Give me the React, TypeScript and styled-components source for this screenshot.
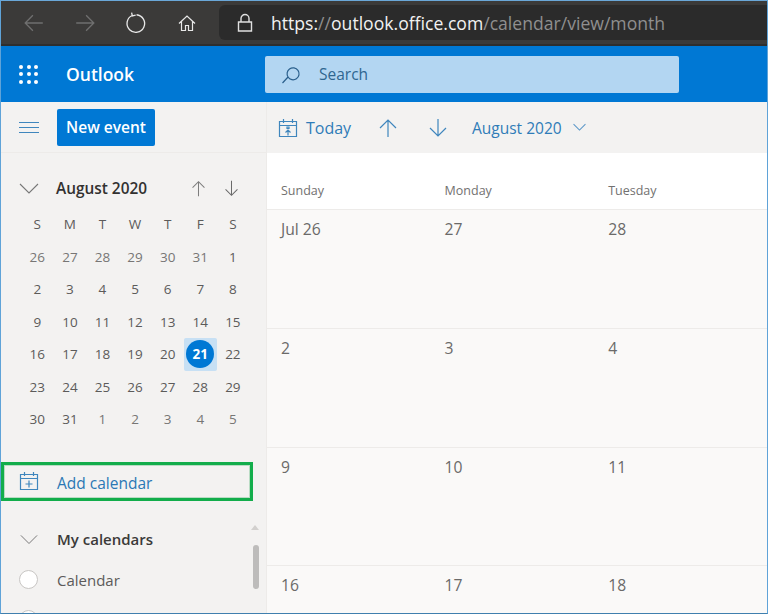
import { FC } from 'react';
import styled, { createGlobalStyle } from 'styled-components';

const GlobalStyle = createGlobalStyle`
  html, body {
    margin: 0;
    padding: 0;
    background: #f3f2f1;
  }
  * {
    box-sizing: border-box;
  }
`;

const MINI_WEEKS = [
  [26, 27, 28, 29, 30, 31, 1],
  [2, 3, 4, 5, 6, 7, 8],
  [9, 10, 11, 12, 13, 14, 15],
  [16, 17, 18, 19, 20, 21, 22],
  [23, 24, 25, 26, 27, 28, 29],
  [30, 31, 1, 2, 3, 4, 5],
];
const WEEK_LETTERS = ['S', 'M', 'T', 'W', 'T', 'F', 'S'];
const DAY_NAMES = ['Sunday', 'Monday', 'Tuesday', ''];
const MONTH_ROWS = [
  ['Jul 26', '27', '28', ''],
  ['2', '3', '4', ''],
  ['9', '10', '11', ''],
  ['16', '17', '18', ''],
];

const Line: FC<{ d: string; color: string; size?: number; width?: number }> = ({
  d,
  color,
  size = 20,
  width = 1.2,
}) => (
  <svg width={size} height={size} viewBox="0 0 20 20" fill="none" stroke={color} strokeWidth={width}>
    <path d={d} />
  </svg>
);

const CalendarGlyph: FC<{ plus?: boolean }> = ({ plus }) => (
  <svg width="20" height="20" viewBox="0 0 20 20" fill="none" stroke="#3f86bd" strokeWidth="1.2">
    <path d="M1.5 3.5h17v15h-17zM1.5 7.5h17M5.5 1v4M14.5 1v4" />
    {plus ? (
      <path d="M10 9.5v7M6.5 13h7" />
    ) : (
      <path d="M10 17.5v-5M7.5 14.5l2.5-2.5 2.5 2.5M9 9h2v1.5h-2z" />
    )}
  </svg>
);

const App: FC = () => (
  <>
    <GlobalStyle />
    <Frame>
      <BrowserBar>
        <NavSlot>
          <Line d="M18 10H2M9 3l-7 7 7 7" color="#6f6f6f" size={22} />
        </NavSlot>
        <NavSlot>
          <Line d="M2 10h16M11 3l7 7-7 7" color="#6f6f6f" size={22} />
        </NavSlot>
        <NavSlot>
          <Line d="M6.5 3.2a8 8 0 1 0 4-.7M6 .5l.7 3 3-.7" color="#e8e8e8" size={22} />
        </NavSlot>
        <NavSlot>
          <Line d="M2 10.5 10 3l8 7.5M4.5 8.5V17.5h4v-5h3v5h4V8.5" color="#e8e8e8" size={20} />
        </NavSlot>
        <AddressBar>
          <LockSlot>
            <Line d="M3.5 9h13v9h-13zM6 9V5.5a4 4 0 0 1 8 0V9" color="#e0e0e0" size={20} width={1.4} />
          </LockSlot>
          <UrlStrong>https:</UrlStrong>
          <UrlDim>//</UrlDim>
          <UrlStrong>outlook.office.com</UrlStrong>
          <UrlDim>/calendar/view/month</UrlDim>
        </AddressBar>
      </BrowserBar>

      <AppHeader>
        <WaffleSlot>
          <Waffle>
            {Array.from({ length: 9 }).map((_, i) => (
              <WaffleDot key={i} />
            ))}
          </Waffle>
        </WaffleSlot>
        <Brand>Outlook</Brand>
        <SearchBox>
          <Line d="M7 13a6 6 0 1 0 1.5-8 6 6 0 0 0-1.5 8zM7.5 12.5 1.5 19" color="#2a5f8c" size={20} />
          <SearchLabel>Search</SearchLabel>
        </SearchBox>
      </AppHeader>

      <Body>
        <Sidebar>
          <SideToolbar>
            <Hamburger>
              <HamburgerBar />
              <HamburgerBar />
              <HamburgerBar />
            </Hamburger>
            <NewEvent>New event</NewEvent>
          </SideToolbar>

          <MiniHeader>
            <Line d="M1 6l9 9 9-9" color="#777" size={20} width={1.1} />
            <MiniTitle>August 2020</MiniTitle>
            <MiniArrows>
              <Line d="M10 19V2M3 9l7-7 7 7" color="#7d7d7d" size={17} />
              <Line d="M10 1v17M3 11l7 7 7-7" color="#6a6a6a" size={17} />
            </MiniArrows>
          </MiniHeader>

          <MiniGrid>
            {WEEK_LETTERS.map((letter, i) => (
              <MiniCell key={`l${i}`}>{letter}</MiniCell>
            ))}
            {MINI_WEEKS.flat().map((day, i) =>
              i === 26 ? (
                <MiniCell key={i}>
                  <TodayHighlight>
                    <TodayDot>{day}</TodayDot>
                  </TodayHighlight>
                </MiniCell>
              ) : (
                <MiniCell key={i} $muted={i < 6 || i > 36}>
                  {day}
                </MiniCell>
              ),
            )}
          </MiniGrid>

          <AddCalendar>
            <CalendarGlyph plus />
            <AddLabel>Add calendar</AddLabel>
          </AddCalendar>

          <GroupRow>
            <Line d="M1 6l9 9 9-9" color="#777" size={18} width={1.1} />
            <GroupTitle>My calendars</GroupTitle>
          </GroupRow>
          <CalendarRow>
            <Radio />
            <CalendarName>Calendar</CalendarName>
          </CalendarRow>
          <Radio />

          <ScrollArrow />
          <ScrollThumb />
        </Sidebar>

        <Main>
          <MainToolbar>
            <CalendarGlyph />
            <TodayLabel>Today</TodayLabel>
            <ToolArrow>
              <Line d="M10 19V2M2 10l8-8 8 8" color="#3f86bd" size={20} />
            </ToolArrow>
            <ToolArrow>
              <Line d="M10 1v17M2 10l8 8 8-8" color="#3f86bd" size={20} />
            </ToolArrow>
            <MonthLabel>August 2020</MonthLabel>
            <Line d="M3 6l7 7 7-7" color="#5a97c8" size={17} />
          </MainToolbar>

          <DayHeader>
            {DAY_NAMES.map((name, i) => (
              <DayName key={i}>{name}</DayName>
            ))}
          </DayHeader>

          <Month>
            {MONTH_ROWS.flat().map((label, i) => (
              <MonthCell key={i}>{label}</MonthCell>
            ))}
          </Month>
        </Main>
      </Body>
    </Frame>
  </>
);

const Frame = styled.div`
  width: 768px;
  height: 614px;
  overflow: hidden;
  display: flex;
  flex-direction: column;
  border-top: 1px solid #6aa7d8;
  border-left: 1px solid #5fa3d8;
  border-right: 1px solid #5fa3d8;
  border-bottom: 1px solid #3f7fae;
  font-family: 'Open Sans', 'Noto Sans', sans-serif;
`;

const BrowserBar = styled.div`
  height: 45px;
  flex: none;
  display: flex;
  align-items: center;
  padding: 0 0 0 7.5px;
  background: #3b3a39;
  border-bottom: 2px solid #2e2e2e;
`;

const NavSlot = styled.div`
  width: 51px;
  display: flex;
  justify-content: center;
  align-items: center;
`;

const AddressBar = styled.div`
  height: 35px;
  flex: 1;
  margin-left: 6.5px;
  display: flex;
  align-items: center;
  padding-left: 16px;
  background: #2b2b2b;
  border-radius: 6px 0 0 6px;
  font-size: 17.6px;
  white-space: nowrap;
`;

const LockSlot = styled.div`
  display: flex;
  margin-right: 16px;
`;

const UrlStrong = styled.span`
  color: #f2f2f2;
`;

const UrlDim = styled.span`
  color: #8f8f8f;
`;

const AppHeader = styled.div`
  height: 56px;
  flex: none;
  display: flex;
  align-items: center;
  background: #0078d4;
`;

const WaffleSlot = styled.div`
  width: 65px;
  display: flex;
  padding-left: 18px;
`;

const Waffle = styled.div`
  display: grid;
  grid-template-columns: repeat(3, 4px);
  gap: 3.5px;
`;

const WaffleDot = styled.span`
  width: 4px;
  height: 4px;
  border-radius: 50%;
  background: #fff;
`;

const Brand = styled.div`
  width: 199px;
  color: #fff;
  font-size: 17.5px;
  font-weight: 600;
`;

const SearchBox = styled.div`
  width: 414px;
  height: 37px;
  display: flex;
  align-items: center;
  padding-left: 16px;
  gap: 18px;
  background: #b3d6f2;
  border-radius: 2px;
`;

const SearchLabel = styled.span`
  color: #2f6690;
  font-size: 15.5px;
`;

const Body = styled.div`
  flex: 1;
  min-height: 0;
  display: flex;
`;

const Sidebar = styled.div`
  position: relative;
  width: 265px;
  flex: none;
  overflow: hidden;
  background: #f3f2f1;
`;

const SideToolbar = styled.div`
  height: 51px;
  display: flex;
  align-items: center;
  gap: 18px;
  padding-left: 18px;
  border-bottom: 1px solid #edebe9;
`;

const Hamburger = styled.div`
  display: flex;
  flex-direction: column;
  gap: 4px;
  width: 20px;
`;

const HamburgerBar = styled.span`
  height: 1px;
  background: #3f86bd;
`;

const NewEvent = styled.div`
  width: 98px;
  height: 37px;
  display: flex;
  align-items: center;
  justify-content: center;
  background: #0078d4;
  border-radius: 2px;
  color: #fff;
  font-size: 15.5px;
  font-weight: 600;
`;

const MiniHeader = styled.div`
  display: flex;
  align-items: center;
  height: 30px;
  margin-top: 20px;
  padding-left: 18px;
`;

const MiniTitle = styled.div`
  width: 134px;
  margin-left: 17px;
  color: #323130;
  font-size: 15.4px;
  font-weight: 600;
`;

const MiniArrows = styled.div`
  display: flex;
  gap: 16px;
`;

const MiniGrid = styled.div`
  display: grid;
  grid-template-columns: repeat(7, 32.6px);
  grid-auto-rows: 32.5px;
  margin-top: 5px;
  padding-left: 20px;
`;

const MiniCell = styled.div<{ $muted?: boolean }>`
  display: flex;
  align-items: center;
  justify-content: center;
  color: ${({ $muted }) => ($muted ? '#777675' : '#5c5b5a')};
  font-size: 13.5px;
`;

const TodayHighlight = styled.div`
  width: 33px;
  height: 33px;
  display: flex;
  align-items: center;
  justify-content: center;
  background: #c7e0f4;
  border-radius: 2px;
`;

const TodayDot = styled.div`
  width: 28px;
  height: 28px;
  display: flex;
  align-items: center;
  justify-content: center;
  border-radius: 50%;
  background: #0078d4;
  color: #fff;
  font-weight: 700;
  font-size: 13.5px;
`;

const AddCalendar = styled.div`
  width: 252px;
  height: 39px;
  margin-top: 26px;
  display: flex;
  align-items: center;
  padding-left: 15px;
  border: 3px solid #12ad4b;
  outline: 1px solid #b9dcc4;
  outline-offset: -4px;
`;

const AddLabel = styled.span`
  margin-left: 18px;
  padding-top: 3px;
  color: #2b78b5;
  font-size: 15.5px;
`;

const GroupRow = styled.div`
  display: flex;
  align-items: center;
  height: 24px;
  margin-top: 26px;
  padding-left: 19px;
`;

const GroupTitle = styled.div`
  margin-left: 19px;
  color: #3b3a39;
  font-size: 15px;
  font-weight: 600;
`;

const CalendarRow = styled.div`
  display: flex;
  align-items: center;
  height: 24px;
  margin-top: 17px;
  margin-bottom: 18px;
`;

const Radio = styled.span`
  display: block;
  width: 19px;
  height: 19px;
  flex: none;
  margin-left: 18px;
  border-radius: 50%;
  background: #fff;
  border: 1.5px solid #c8c6c4;
`;

const CalendarName = styled.span`
  margin-left: 19px;
  color: #5c5b5a;
  font-size: 15px;
`;

const ScrollArrow = styled.span`
  position: absolute;
  left: 250px;
  top: 423px;
  width: 0;
  height: 0;
  border-left: 4.5px solid transparent;
  border-right: 4.5px solid transparent;
  border-bottom: 5px solid #d2d0ce;
`;

const ScrollThumb = styled.span`
  position: absolute;
  left: 252px;
  top: 443px;
  width: 6px;
  height: 44px;
  border-radius: 3px;
  background: #bdbcbb;
`;

const Main = styled.div`
  flex: 1;
  min-width: 0;
  display: flex;
  flex-direction: column;
  border-left: 1px solid #edebe9;
`;

const MainToolbar = styled.div`
  height: 51px;
  flex: none;
  display: flex;
  align-items: center;
  padding-left: 11px;
  background: #f3f2f1;
  color: #2f7cb8;
`;

const TodayLabel = styled.span`
  width: 57px;
  margin-left: 8px;
  font-size: 16px;
`;

const ToolArrow = styled.span`
  display: flex;
  width: 50px;
  justify-content: center;
`;

const MonthLabel = styled.span`
  margin-left: 9px;
  margin-right: 9px;
  font-size: 15.5px;
`;

const DayHeader = styled.div`
  height: 57px;
  flex: none;
  display: grid;
  grid-template-columns: repeat(4, 163.6px);
  align-items: end;
  padding-bottom: 10px;
  background: #fff;
  border-bottom: 1px solid #edebe9;
`;

const DayName = styled.div`
  padding-left: 14px;
  color: #727170;
  font-size: 12.5px;
`;

const Month = styled.div`
  flex: 1;
  display: grid;
  grid-template-columns: repeat(4, 163.6px);
  grid-auto-rows: 118.8px;
  background: #faf9f8;
`;

const MonthCell = styled.div`
  padding: 8px 0 0 14px;
  border-bottom: 1px solid #edebe9;
  color: #6b6a69;
  font-size: 15.7px;
`;

export default App;
